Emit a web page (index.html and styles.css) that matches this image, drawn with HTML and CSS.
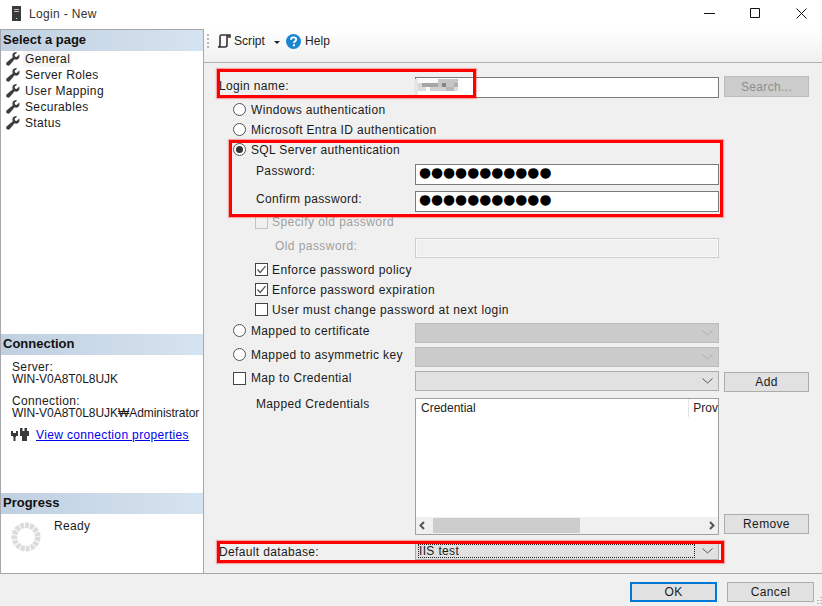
FILE: index.html
```html
<!DOCTYPE html>
<html lang="en">
<head>
<meta charset="utf-8">
<title>Login - New</title>
<link rel="stylesheet" href="styles.css">
</head>
<body>
<svg class="sprites" width="0" height="0">
  <defs>
    <symbol id="wrench" viewBox="0 0 14 14">
      <path d="M13.4 2.6 10.6 5 8.900 4.400 8.600 2.800 11.200.5C9.400-.2 7.400.4 6.700 2 6.200 3.100 6.300 4.200 6.800 5.200L.8 10.200C-.2 11.300.1 12.700 1 13.300 1.900 14 3 13.800 3.800 12.900L8.600 7.300C9.800 7.800 11 7.800 12.100 7 13.300 6.100 13.800 4.200 13.400 2.600Z" fill="#3c3c3c"/>
    </symbol>
    <symbol id="chev" viewBox="0 0 11 6">
      <path d="M.5.5 5.500 5 10.500.5" fill="none" stroke="currentColor" stroke-width="1"/>
    </symbol>
    <symbol id="tick" viewBox="0 0 13 13">
      <path d="M2.500 6.500 5.200 9.500 10.500 3.200" fill="none" stroke="#555" stroke-width="1.300"/>
    </symbol>
  </defs>
</svg>

<div class="dialog">
  <header class="titlebar">
    <svg class="app-icon" width="9" height="15" viewBox="0 0 9 15"><path d="M0 0H9V15H0Z" fill="#3a3a3a"/><path d="M2 3H7V4H2ZM2 5H7V6H2Z" fill="#bbb"/><path d="M4 12H5V13H4Z" fill="#ddd"/></svg>
    <span class="title">Login - New</span>
    <div class="winbtns">
      <svg width="11" height="11" viewBox="0 0 11 11"><path d="M0 5.500H11" stroke="#111"/></svg>
      <svg width="11" height="11" viewBox="0 0 11 11"><path d="M.5.5H9.500V9.500H.5Z" fill="none" stroke="#111"/></svg>
      <svg width="11" height="11" viewBox="0 0 11 11"><path d="M.5.5 10.500 10.500M10.500.5.5 10.500" fill="none" stroke="#111"/></svg>
    </div>
  </header>

  <div class="main">
    <aside class="side">
      <section class="side-pages">
        <h2 class="side-head">Select a page</h2>
        <ul class="pages">
          <li class="page"><svg class="wrench"><use href="#wrench"/></svg><span class="page-label current">General</span></li>
          <li class="page"><svg class="wrench"><use href="#wrench"/></svg><span class="page-label">Server Roles</span></li>
          <li class="page"><svg class="wrench"><use href="#wrench"/></svg><span class="page-label">User Mapping</span></li>
          <li class="page"><svg class="wrench"><use href="#wrench"/></svg><span class="page-label">Securables</span></li>
          <li class="page"><svg class="wrench"><use href="#wrench"/></svg><span class="page-label">Status</span></li>
        </ul>
      </section>
      <section class="side-conn">
        <h2 class="side-head">Connection</h2>
        <div class="conn-body">
          <div class="conn-line">Server:</div>
          <div class="conn-line conn-host">WIN-V0A8T0L8UJK</div>
          <div class="conn-line conn-gap">Connection:</div>
          <div class="conn-line conn-host">WIN-V0A8T0L8UJK₩Administrator</div>
          <div class="conn-link">
            <svg class="plug" width="18" height="14" viewBox="0 0 18 14"><g fill="#3a3a3a"><path d="M0 3H2V5H5V3H7V8H5V9H4.500V13H2.500V9H2V8H0Z"/><path d="M9 0H11.500V3H13.500V0H16V3H18V8H16V13H11V8H9Z"/></g></svg>
            <a class="link" href="#">View connection properties</a>
          </div>
        </div>
      </section>
      <section class="side-prog">
        <h2 class="side-head">Progress</h2>
        <div class="prog-body">
          <svg class="spinner" width="30" height="30" viewBox="0 0 32 32"><circle cx="16" cy="16" r="12.500" fill="none" stroke="#dcdcdc" stroke-width="6" stroke-dasharray="4.200 1.030"/></svg>
          <span class="ready">Ready</span>
        </div>
      </section>
    </aside>

    <div class="content">
      <div class="toolbar">
        <span class="grip"></span>
        <svg class="script-icon" width="14" height="14" viewBox="0 0 14 14"><path d="M4 1H13V3H11M4 1C3 1 3 2 3 3V11C3 12 2 13 1 13H8C9 13 10 12 10 11V3C10 2 10.500 1 12 1" fill="none" stroke="#333" stroke-width="1.600"/></svg>
        <span class="tool-text">Script</span>
        <span class="drop"></span>
        <svg class="help-icon" width="15" height="15" viewBox="0 0 15 15"><circle cx="7.500" cy="7.500" r="7.500" fill="#1b86d0"/><path d="M5 5.800C5 4.300 6.200 3.400 7.600 3.400 9.100 3.400 10.200 4.300 10.200 5.500 10.200 7.200 8 7.300 8 9" fill="none" stroke="#fff" stroke-width="1.900"/><rect x="6.900" y="10.200" width="2.100" height="2.100" fill="#fff"/></svg>
        <span class="tool-text">Help</span>
      </div>

      <form class="form">
        <div class="row r-login">
          <label class="lab up-3">Login name:</label>
          <div class="field input"></div>
          <button type="button" class="btn btn-off r-btn-search">Search...</button>
        </div>
        <div class="row r-20">
          <div class="lab ind-radio"><span class="radio"></span>Windows authentication</div>
        </div>
        <div class="row r-20">
          <div class="lab ind-radio"><span class="radio"></span>Microsoft Entra ID authentication</div>
        </div>
        <div class="row r-20">
          <div class="lab ind-radio"><span class="radio radio-on"></span>SQL Server authentication</div>
        </div>
        <div class="row r-pass">
          <label class="lab ind-sub up-7">Password:</label>
          <div class="field input dots">●●●●●●●●●●●</div>
        </div>
        <div class="row r-conf">
          <label class="lab ind-sub up-5">Confirm password:</label>
          <div class="field input dots">●●●●●●●●●●●</div>
        </div>
        <div class="row r-spec">
          <div class="lab ind-check muted"><span class="check check-off"></span>Specify old password</div>
        </div>
        <div class="row r-old">
          <label class="lab ind-old muted up-5">Old password:</label>
          <div class="field input input-off"></div>
        </div>
        <div class="row r-enf">
          <div class="lab ind-check"><span class="check"><svg width="13" height="13"><use href="#tick"/></svg></span>Enforce password policy</div>
        </div>
        <div class="row r-20">
          <div class="lab ind-check"><span class="check"><svg width="13" height="13"><use href="#tick"/></svg></span>Enforce password expiration</div>
        </div>
        <div class="row r-20">
          <div class="lab ind-check"><span class="check"></span>User must change password at next login</div>
        </div>
        <div class="row r-cert">
          <div class="lab ind-radio up-5"><span class="radio"></span>Mapped to certificate</div>
          <div class="field combo combo-off"><svg class="chev"><use href="#chev"/></svg></div>
        </div>
        <div class="row r-asym">
          <div class="lab ind-radio up-5"><span class="radio"></span>Mapped to asymmetric key</div>
          <div class="field combo combo-off"><svg class="chev"><use href="#chev"/></svg></div>
        </div>
        <div class="row r-asym">
          <div class="lab ind-radio up-7"><span class="check check-flush"></span>Map to Credential</div>
          <div class="field combo"><svg class="chev"><use href="#chev"/></svg></div>
          <button type="button" class="btn r-btn-add">Add</button>
        </div>
        <div class="row r-table">
          <div class="lab ind-sub lab-top">Mapped Credentials</div>
          <div class="field table">
            <div class="thead"><span class="th th-cred">Credential</span><span class="th th-prov">Prov</span></div>
            <div class="tbody"></div>
            <div class="hscroll">
              <svg class="sc-arrow" width="8" height="9" viewBox="0 0 8 9"><path d="M6 1 2.500 4.500 6 8" fill="none" stroke="#555" stroke-width="2"/></svg>
              <div class="sc-track"><div class="sc-thumb"></div></div>
              <svg class="sc-arrow" width="8" height="9" viewBox="0 0 8 9"><path d="M2 1 5.500 4.500 2 8" fill="none" stroke="#555" stroke-width="2"/></svg>
            </div>
          </div>
          <button type="button" class="btn r-btn-remove">Remove</button>
        </div>
        <div class="row r-db">
          <label class="lab lab-db">Default database:</label>
          <div class="field combo combo-db"><span class="db-value">IIS test</span><svg class="chev"><use href="#chev"/></svg></div>
        </div>
      </form>
    </div>
  </div>

  <footer class="footer">
    <button type="button" class="btn btn-ok">OK</button>
    <button type="button" class="btn btn-cancel">Cancel</button>
  </footer>

  <svg class="blur" width="48" height="17" viewBox="0 0 48 17" shape-rendering="crispEdges">
    <rect x="0" y="0" width="4" height="17" fill="#e6e6e6"/>
    <rect x="4" y="0" width="44" height="12" fill="#fafafa"/>
    <rect x="8" y="4" width="16" height="4" fill="#a6a6a6"/>
    <rect x="4" y="4" width="4" height="4" fill="#d8d8d8"/>
    <rect x="4" y="8" width="8" height="4" fill="#dcdcdc"/>
    <rect x="16" y="8" width="16" height="4" fill="#cfcfcf"/>
    <rect x="24" y="0" width="20" height="8" fill="#c6c6c6"/>
    <rect x="28" y="4" width="4" height="4" fill="#858585"/>
    <rect x="32" y="8" width="8" height="4" fill="#b8b8b8"/>
    <rect x="40" y="4" width="4" height="4" fill="#b0b0b0"/>
    <rect x="40" y="8" width="4" height="4" fill="#dcdcdc"/>
  </svg>
  <div class="mark mark-login"></div>
  <div class="mark mark-sql"></div>
  <div class="mark mark-db"></div>
  <svg class="resize-grip" width="7" height="10" viewBox="0 0 7 10" shape-rendering="crispEdges"><path d="M5 1H7V2H5ZM5 4H7V5H5ZM2 4H4V5H2ZM5 7H7V8H5ZM2 7H4V8H2Z" fill="#b8b8b8"/></svg>
</div>
</body>
</html>
```

FILE: styles.css
```css
* { box-sizing: border-box; }
html, body { margin: 0; padding: 0; }
body {
  width: 822px;
  height: 606px;
  overflow: hidden;
  background: #f0f0f0;
  font-family: "Liberation Sans", Arial, sans-serif;
  font-size: 12px;
  letter-spacing: 0.35px;
  color: #1a1a1a;
}
.sprites { position: absolute; }
.dialog { position: relative; width: 822px; height: 606px; display: flex; flex-direction: column; }

.titlebar { height: 29px; flex: none; background: #fff; display: flex; align-items: center; padding-left: 12px; }
.app-icon { flex: none; margin-top: -2px; }
.title { margin-left: 8px; color: #333; margin-top: -1px; }
.winbtns { margin-left: auto; display: flex; gap: 35px; padding-right: 15px; margin-top: -2px; }

.main { height: 545px; flex: none; display: flex; border-bottom: 1px solid #a6a6ac; }

.side { width: 204px; flex: none; background: #fff; border: 1px solid #a6a6ac; border-width: 1px 1px 0 1px; display: flex; flex-direction: column; }
.side-head {
  margin: 0; height: 21px; padding-left: 2px;
  font-size: 13px; font-weight: 700; letter-spacing: 0; line-height: 20px; color: #111;
  background: linear-gradient(90deg, #c0d0e0, #d6e3f0);
}
.side-pages { height: 304px; flex: none; }
.pages { list-style: none; margin: 0; padding: 0; }
.page { height: 16px; display: flex; align-items: center; padding-left: 5px; }
.wrench { width: 14px; height: 14px; flex: none; }
.page-label { margin-left: 3px; padding: 1px 2px 0; line-height: 15px; }
.current { background: #f6f6f6; }

.side-conn { height: 159px; flex: none; }
.conn-body { padding: 6px 0 0 11px; }
.conn-line { line-height: 12px; white-space: nowrap; }
.conn-host { letter-spacing: -0.05px; }
.conn-gap { margin-top: 10px; }
.conn-link { display: flex; align-items: center; margin-top: 9px; margin-left: -1px; }
.plug { flex: none; }
.link { margin-left: 7px; color: #0000ee; text-decoration: underline; }

.prog-body { display: flex; padding: 8px 0 0 10px; }
.spinner { flex: none; }
.ready { margin-left: 13px; margin-top: -3px; }

.content { flex: 1; min-width: 0; display: flex; flex-direction: column; }
.toolbar {
  height: 34px; flex: none; display: flex; align-items: center; padding: 0 0 9px 3px;
  background: linear-gradient(#fff, #f0f0f0);
  border-bottom: 1px solid #b0b0b8;
}
.grip { width: 2px; height: 14px; margin-right: 8px; background: repeating-linear-gradient(#b8b8b8 0 2px, transparent 2px 4px); }
.script-icon { flex: none; margin-right: 3px; }
.tool-text { color: #222; letter-spacing: 0.05px; }
.drop { width: 0; height: 0; margin: 2px 6px 0 9px; border: 3px solid transparent; border-top-color: #222; border-bottom-width: 0; }
.help-icon { flex: none; margin-right: 4px; }

.form { padding: 13px 0 0 15px; }
.row { display: flex; align-items: center; }
.r-login { height: 23px; }
.r-20 { height: 20px; }
.r-20 .lab, .r-enf .lab { padding-top: 1px; }
.r-pass { height: 21px; margin-top: 5px; }
.r-conf { height: 21px; margin-top: 6px; }
.r-spec { height: 18px; margin-top: 1px; }
.r-old { height: 20px; margin-top: 7px; }
.r-enf { height: 20px; margin-top: 1px; }
.r-cert { height: 20px; margin-top: 4px; }
.r-asym { height: 20px; margin-top: 4px; }
.r-table { height: 137px; margin-top: 7px; align-items: stretch; }
.r-db { height: 18px; margin-top: 7px; }

.lab { width: 196px; flex: none; display: flex; align-items: center; white-space: nowrap; }
.up-3 { padding-bottom: 3px; }
.up-5 { padding-bottom: 5px; }
.up-7 { padding-bottom: 7px; }
.lab-top { align-items: flex-start; line-height: 12px; height: 14px; }
.lab-db { padding-top: 2px; }
.ind-radio { padding-left: 14px; }
.ind-sub { padding-left: 37px; }
.ind-check { padding-left: 36px; letter-spacing: 0.43px; }
.ind-old { padding-left: 56px; letter-spacing: 0.43px; }
.muted { color: #a0a0a0; }

.radio { width: 13px; height: 13px; flex: none; margin-right: 5px; border: 1px solid #555; border-radius: 50%; background: #fff; display: flex; align-items: center; justify-content: center; }
.radio-on::after { content: ""; width: 7px; height: 7px; border-radius: 50%; background: #333; }
.check { width: 13px; height: 13px; flex: none; margin-right: 5px; border: 1px solid #444; background: #fff; display: flex; }
.ind-check .check { margin-right: 4px; }
.check svg { flex: none; margin: -1px; }
.check-off { border-color: #c4c4c4; background: #f0f0f0; }
.check-flush { margin-top: 1px; }

.field { width: 304px; flex: none; }
.input { height: 21px; background: #fff; border: 1px solid #7a7a7a; }
.input-off { height: 20px; background: #f0f0f0; border-color: #cdcdcd; box-shadow: inset 0 0 0 1px #fafafa; }
.dots { display: flex; align-items: center; padding: 0 0 3px 3px; font-family: "DejaVu Sans", sans-serif; font-size: 13.8px; letter-spacing: 0; line-height: 1; color: #000; white-space: nowrap; overflow: hidden; }

.combo { height: 20px; background: #e1e1e1; border: 1px solid #adadad; display: flex; align-items: center; justify-content: flex-end; padding-right: 5px; color: #555; }
.combo-off { background: #cbcbcb; border-color: #bcbcbc; color: #b0b0b0; }
.chev { width: 11px; height: 6px; flex: none; }
.combo-db { height: 18px; justify-content: space-between; padding: 0 5px 0 2px; }
.db-value { flex: 1; height: 14px; line-height: 12px; margin-right: 7px; border: 1px dotted #222; color: #1a1a1a; }

.table { background: #fff; border: 1px solid #a0a0a0; display: flex; flex-direction: column; }
.thead { display: flex; height: 18px; flex: none; overflow: hidden; }
.th { letter-spacing: 0; line-height: 19px; white-space: nowrap; color: #222; }
.th-cred { width: 275px; padding-left: 5px; border-right: 1px solid #e4e4e4; }
.th-prov { padding-left: 4px; }
.tbody { flex: 1; }
.hscroll { height: 17px; flex: none; background: #f0f0f0; display: flex; align-items: center; padding: 0 2px; }
.sc-arrow { flex: none; }
.sc-track { flex: 1; height: 15px; margin: 0 4px 0 7px; }
.sc-thumb { width: 147px; height: 15px; background: #cdcdcd; }

.btn { font: inherit; letter-spacing: inherit; color: #1a1a1a; background: #e1e1e1; border: 1px solid #adadad; padding: 0; height: 20px; }
.btn-off { color: #8e8e8e; background: #cccccc; border-color: #bcbcbc; padding-top: 1px; }
.r-btn-search { width: 85px; height: 21px; margin: -3px 0 0 5px; }
.r-btn-add { width: 85px; margin: 1px 0 0 5px; }
.r-btn-remove { width: 85px; margin: auto 0 1px 5px; }

.footer { flex: 1; display: flex; align-items: flex-start; padding: 8px 0 0 630px; gap: 10px; }
.btn-ok, .btn-cancel { width: 87px; height: 20px; }
.btn-ok { border: 2px solid #0078d7; }

.blur { position: absolute; left: 414px; top: 79px; }
.mark { position: absolute; border: 3px solid #f00; box-shadow: 0 0 1px 1px rgba(255, 0, 0, 0.3); pointer-events: none; }
.mark-login { left: 217px; top: 69px; width: 259px; height: 29px; }
.mark-sql { left: 229px; top: 140px; width: 494px; height: 77px; }
.mark-db { left: 217px; top: 541px; width: 507px; height: 22px; }
.resize-grip { position: absolute; right: 0; bottom: 0; }
```
